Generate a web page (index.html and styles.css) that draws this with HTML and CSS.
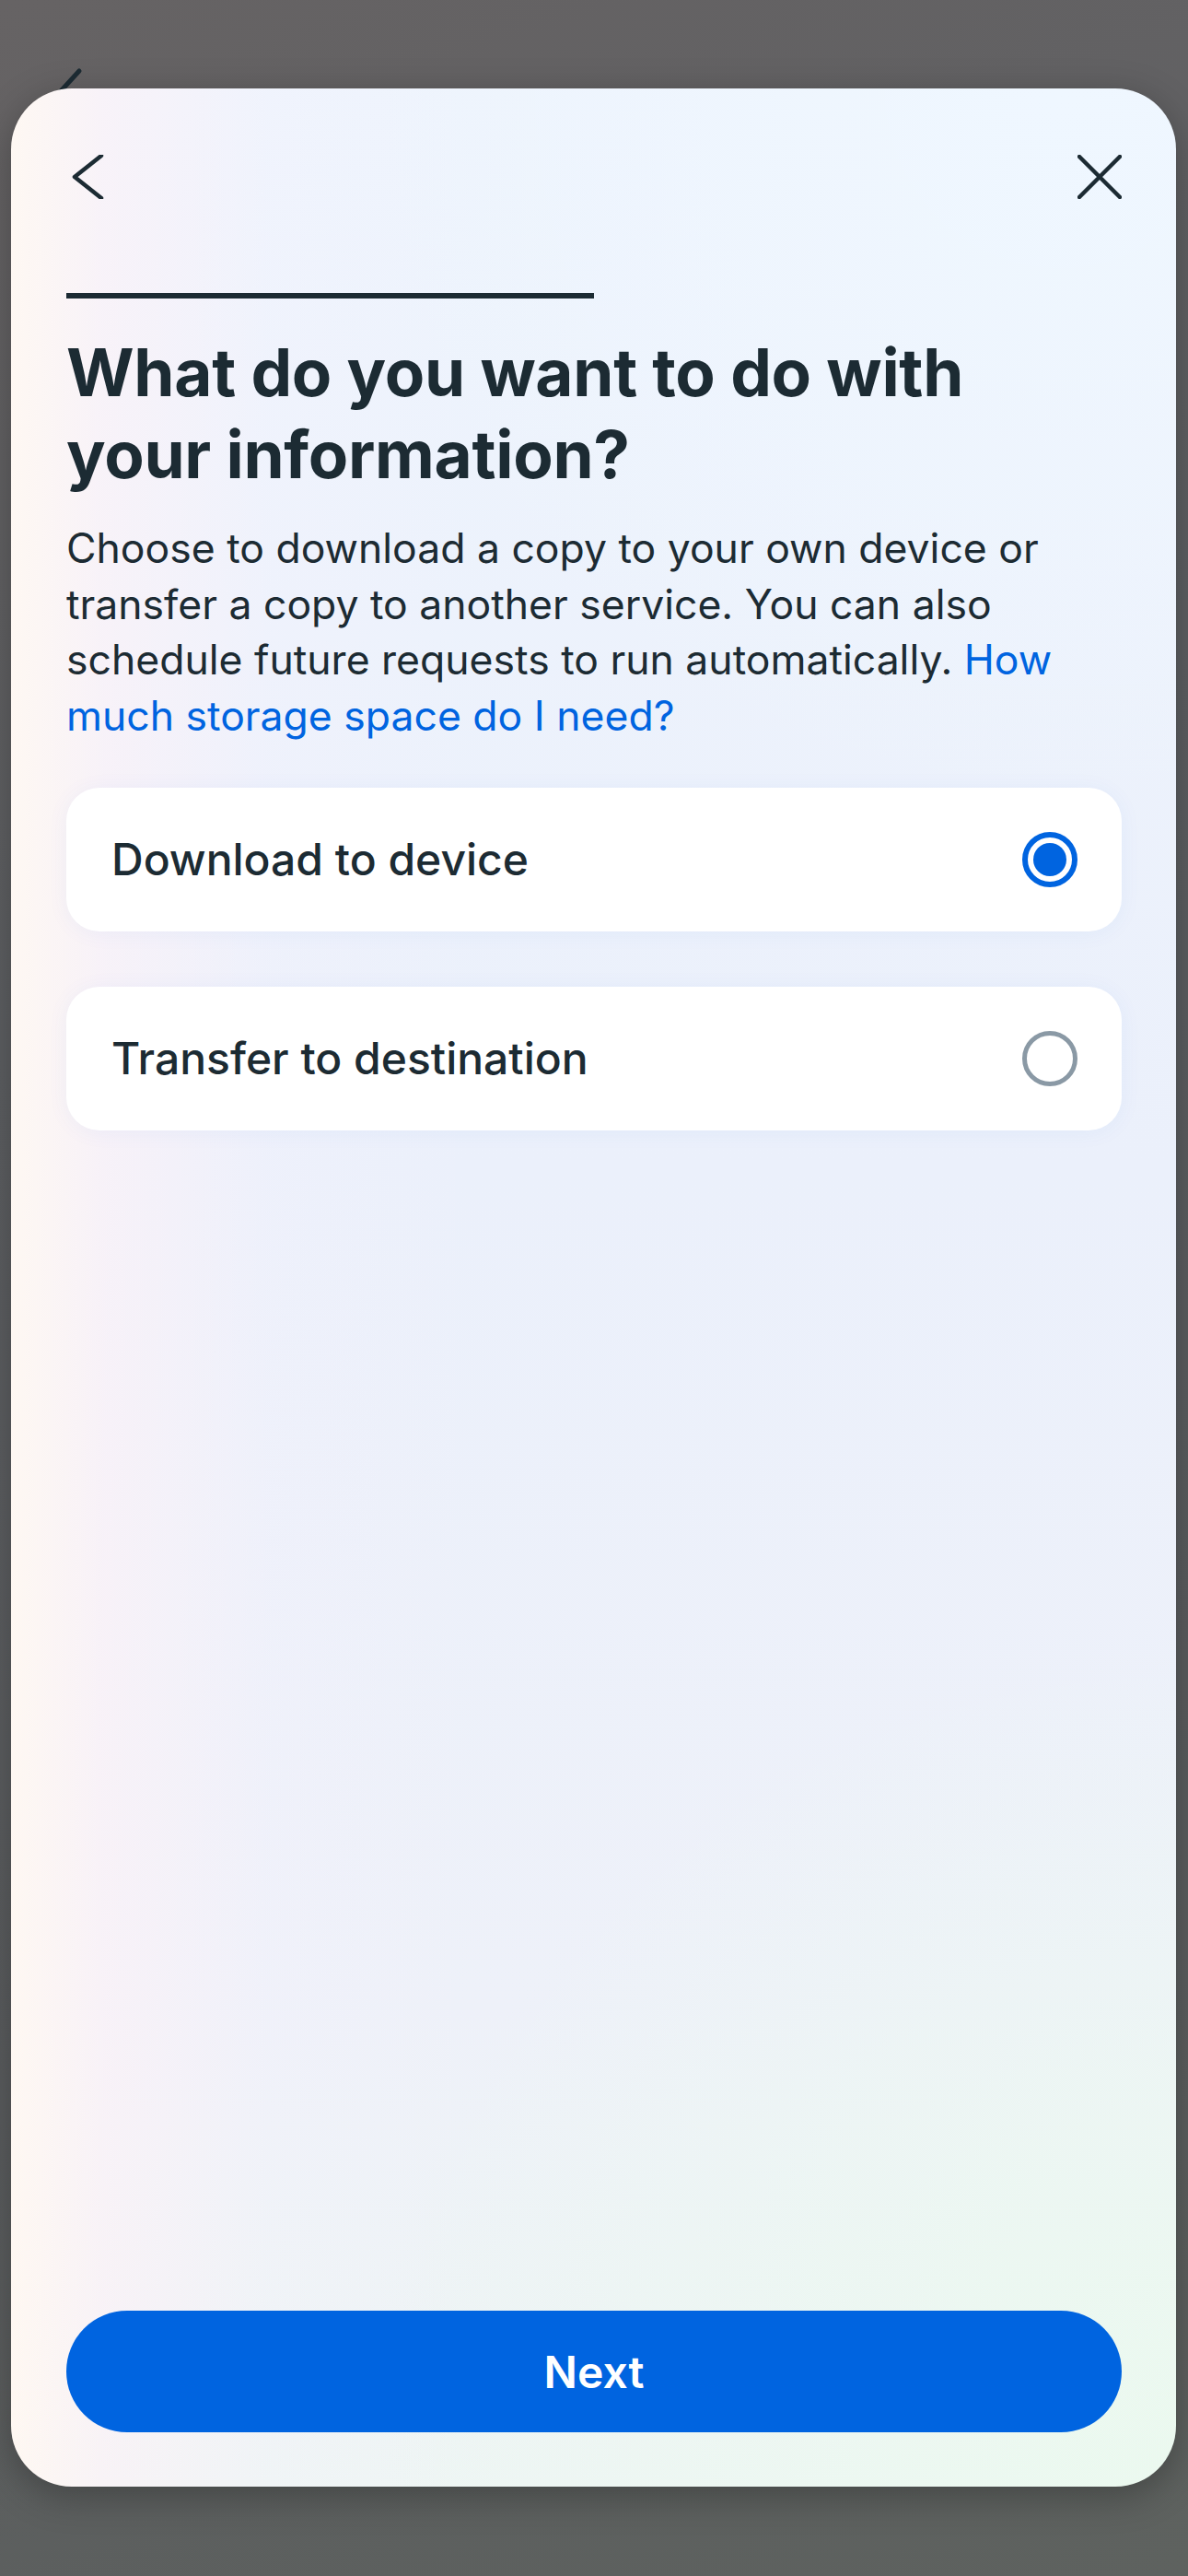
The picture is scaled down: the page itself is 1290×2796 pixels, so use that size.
FILE: index.html
```html
<!DOCTYPE html>
<html lang="en">
<head>
<meta charset="utf-8">
<title>Download your information</title>
<link rel="stylesheet" href="styles.css">
</head>
<body>
<div class="backdrop-back">
  <svg width="60" height="60" viewBox="0 0 60 60"><path d="M46 17 L14 52" stroke="#1c2b33" stroke-width="5" stroke-linecap="round" fill="none"/></svg>
</div>
<main class="sheet">
  <header class="sheet-header">
    <button class="icon-btn" aria-label="Back">
      <svg width="48" height="48" viewBox="0 0 48 48"><path d="M38 1 L9 24 L38 47" stroke="#1c2b33" stroke-width="4.5" stroke-linecap="round" stroke-linejoin="round" fill="none"/></svg>
    </button>
    <button class="icon-btn" aria-label="Close">
      <svg width="48" height="48" viewBox="0 0 48 48"><path d="M2 2 L46 46 M46 2 L2 46" stroke="#1c2b33" stroke-width="4.5" stroke-linecap="round" fill="none"/></svg>
    </button>
  </header>
  <div class="progress"><div class="progress-fill" style="width:50%"></div></div>
  <h1 class="title">What do you want to do with your information?</h1>
  <p class="desc">Choose to download a copy to your own device or transfer a copy to another service. You can also schedule future requests to run automatically. <a class="link" href="#">How much storage space do I need?</a></p>
  <div class="options">
    <label class="option">
      <span class="option-label">Download to device</span>
      <span class="radio radio-on"><span class="radio-dot"></span></span>
    </label>
    <label class="option">
      <span class="option-label">Transfer to destination</span>
      <span class="radio"></span>
    </label>
  </div>
  <div class="spacer"></div>
  <button class="next-btn">Next</button>
</main>
</body>
</html>
```
FILE: styles.css
```css
* { box-sizing: border-box; }
html, body { margin: 0; padding: 0; }
body {
  width: 1290px;
  height: 2796px;
  overflow: hidden;
  position: relative;
  background: linear-gradient(160deg, #666364 0%, #5d5f62 35%, #5a5c5e 70%, #5e625f 100%);
  font-family: "Inter", "Noto Sans", "Liberation Sans", sans-serif;
  color: #1c2b33;
  padding-top: 96px;
}
.backdrop-back {
  position: absolute;
  left: 40px;
  top: 60px;
  width: 60px;
  height: 60px;
}
.sheet {
  position: relative;
  margin: 0 13px 0 12px;
  height: 2603px;
  border-radius: 66px;
  padding: 0 59px 59px 60px;
  display: flex;
  flex-direction: column;
  box-shadow: 0 10px 40px rgba(0,0,0,0.28);
  background:
    linear-gradient(90deg, rgba(255,248,242,0.95) 0%, rgba(252,242,247,0.7) 8%, rgba(246,242,252,0.25) 22%, rgba(240,244,252,0) 40%),
    radial-gradient(ellipse 70% 35% at 100% 100%, #ebf9ef 0%, rgba(235,249,239,0) 100%),
    radial-gradient(ellipse 60% 30% at 90% 0%, #eff7ff 0%, rgba(239,247,255,0) 100%),
    linear-gradient(180deg, #eef4fd 0%, #ebf0fb 45%, #eef1f9 80%, #eef5f4 100%);
}
.sheet-header {
  margin-top: 72px;
  height: 48px;
  display: flex;
  justify-content: space-between;
  align-items: center;
}
.icon-btn {
  width: 48px;
  height: 48px;
  padding: 0;
  border: 0;
  background: transparent;
  display: flex;
  align-items: center;
  justify-content: center;
}
.progress {
  margin-top: 102px;
  height: 6px;
  width: 100%;
}
.progress-fill {
  height: 100%;
  background: #1c2b33;
}
.title {
  margin: 36px 0 0;
  max-width: 1080px;
  font-size: 71px;
  line-height: 89px;
  font-weight: 700;
  letter-spacing: -0.3px;
  color: #1c2b33;
}
.desc {
  margin: 27px 0 0;
  font-size: 44.5px;
  line-height: 60.7px;
  font-weight: 400;
  color: #1c2b33;
}
.link {
  color: #0064e0;
  text-decoration: none;
}
.options {
  margin-top: 47px;
  display: flex;
  flex-direction: column;
  gap: 60px;
}
.option {
  height: 156px;
  background: #ffffff;
  border-radius: 36px;
  padding: 0 48px 0 49px;
  display: flex;
  align-items: center;
  justify-content: space-between;
  box-shadow: 0 2px 24px rgba(0,100,224,0.05);
}
.option-label {
  font-size: 48px;
  font-weight: 500;
  color: #1c2b33;
}
.radio {
  width: 60px;
  height: 60px;
  border-radius: 50%;
  border: 5.5px solid #8a99a5;
  display: flex;
  align-items: center;
  justify-content: center;
}
.radio-on {
  border: 6px solid #0064e0;
}
.radio-dot {
  width: 36px;
  height: 36px;
  border-radius: 50%;
  background: #0064e0;
}
.spacer { flex: 1; }
.next-btn {
  height: 132px;
  width: 100%;
  border: 0;
  border-radius: 66px;
  background: #0064e0;
  color: #ffffff;
  font-family: "Inter", "Noto Sans", "Liberation Sans", sans-serif;
  font-size: 48px;
  font-weight: 600;
}
```
